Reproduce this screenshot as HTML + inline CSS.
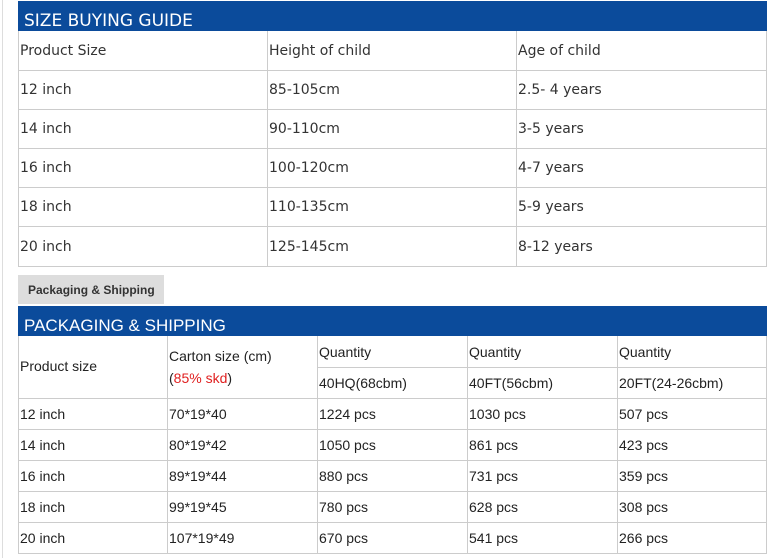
<!DOCTYPE html>
<html><head><meta charset="utf-8"><style>
body{margin:0;width:781px;height:558px;background:#fff;position:relative;overflow:hidden}
.a{position:absolute;box-sizing:border-box}
.bar{background:#0b4b9b;color:#fff;font-size:17px;padding-left:6px;line-height:20px}
.v{font-family:"DejaVu Sans",Verdana,sans-serif;font-size:14px;color:#333}
.r{font-family:"Liberation Sans",Arial,sans-serif;font-size:14px;color:#222}
.h{height:1px;background:#ccc}
.w{width:1px;background:#ccc}
.t{position:absolute;white-space:nowrap}
</style></head><body>
<div class="a" style="left:2px;top:0;width:1px;height:558px;background:#ddd"></div>
<div class="a bar v" style="left:18px;top:1px;width:749px;height:30px;padding-top:10px;font-size:17px;color:#fff">SIZE BUYING GUIDE</div>
<div class="a h" style="left:18px;top:70px;width:749px"></div>
<div class="a h" style="left:18px;top:109px;width:749px"></div>
<div class="a h" style="left:18px;top:148px;width:749px"></div>
<div class="a h" style="left:18px;top:187px;width:749px"></div>
<div class="a h" style="left:18px;top:226px;width:749px"></div>
<div class="a h" style="left:18px;top:266px;width:749px"></div>
<div class="a w" style="left:18px;top:31px;height:236px"></div>
<div class="a w" style="left:267px;top:31px;height:236px"></div>
<div class="a w" style="left:516px;top:31px;height:236px"></div>
<div class="a w" style="left:766px;top:31px;height:236px"></div>
<div class="v">
<span class="t" style="left:20px;top:43px">Product Size</span><span class="t" style="left:269px;top:43px">Height of child</span><span class="t" style="left:518px;top:43px">Age of child</span>
<span class="t" style="left:20px;top:82px">12 inch</span><span class="t" style="left:269px;top:82px">85-105cm</span><span class="t" style="left:518px;top:82px">2.5- 4 years</span>
<span class="t" style="left:20px;top:121px">14 inch</span><span class="t" style="left:269px;top:121px">90-110cm</span><span class="t" style="left:518px;top:121px">3-5 years</span>
<span class="t" style="left:20px;top:160px">16 inch</span><span class="t" style="left:269px;top:160px">100-120cm</span><span class="t" style="left:518px;top:160px">4-7 years</span>
<span class="t" style="left:20px;top:199px">18 inch</span><span class="t" style="left:269px;top:199px">110-135cm</span><span class="t" style="left:518px;top:199px">5-9 years</span>
<span class="t" style="left:20px;top:239px">20 inch</span><span class="t" style="left:269px;top:239px">125-145cm</span><span class="t" style="left:518px;top:239px">8-12 years</span>
</div>
<div class="a r" style="left:18px;top:275px;width:146px;height:29px;background:#ddd;font-weight:bold;font-size:12px;color:#333;padding:8px 0 0 10px">Packaging &amp; Shipping</div>
<div class="a bar r" style="left:18px;top:306px;width:749px;height:30px;padding-top:10px;font-size:17px;color:#fff">PACKAGING &amp; SHIPPING</div>
<div class="a h" style="left:317px;top:367px;width:450px"></div>
<div class="a h" style="left:18px;top:398px;width:749px"></div>
<div class="a h" style="left:18px;top:429px;width:749px"></div>
<div class="a h" style="left:18px;top:460px;width:749px"></div>
<div class="a h" style="left:18px;top:491px;width:749px"></div>
<div class="a h" style="left:18px;top:522px;width:749px"></div>
<div class="a h" style="left:18px;top:553px;width:749px"></div>
<div class="a w" style="left:18px;top:336px;height:218px"></div>
<div class="a w" style="left:167px;top:336px;height:218px"></div>
<div class="a w" style="left:317px;top:336px;height:218px"></div>
<div class="a w" style="left:467px;top:336px;height:218px"></div>
<div class="a w" style="left:617px;top:336px;height:218px"></div>
<div class="a w" style="left:766px;top:336px;height:218px"></div>
<div class="r">
<span class="t" style="left:20px;top:358px">Product size</span>
<span class="t" style="left:169px;top:348px">Carton size (cm)</span>
<span class="t" style="left:169px;top:370px">(<span style="color:#e02020">85% skd</span>)</span>
<span class="t" style="left:319px;top:344px">Quantity</span><span class="t" style="left:469px;top:344px">Quantity</span><span class="t" style="left:619px;top:344px">Quantity</span>
<span class="t" style="left:319px;top:375px">40HQ(68cbm)</span><span class="t" style="left:469px;top:375px">40FT(56cbm)</span><span class="t" style="left:619px;top:375px">20FT(24-26cbm)</span>
<span class="t" style="left:20px;top:406px">12 inch</span><span class="t" style="left:169px;top:406px">70*19*40</span><span class="t" style="left:319px;top:406px">1224 pcs</span><span class="t" style="left:469px;top:406px">1030 pcs</span><span class="t" style="left:619px;top:406px">507 pcs</span>
<span class="t" style="left:20px;top:437px">14 inch</span><span class="t" style="left:169px;top:437px">80*19*42</span><span class="t" style="left:319px;top:437px">1050 pcs</span><span class="t" style="left:469px;top:437px">861 pcs</span><span class="t" style="left:619px;top:437px">423 pcs</span>
<span class="t" style="left:20px;top:468px">16 inch</span><span class="t" style="left:169px;top:468px">89*19*44</span><span class="t" style="left:319px;top:468px">880 pcs</span><span class="t" style="left:469px;top:468px">731 pcs</span><span class="t" style="left:619px;top:468px">359 pcs</span>
<span class="t" style="left:20px;top:499px">18 inch</span><span class="t" style="left:169px;top:499px">99*19*45</span><span class="t" style="left:319px;top:499px">780 pcs</span><span class="t" style="left:469px;top:499px">628 pcs</span><span class="t" style="left:619px;top:499px">308 pcs</span>
<span class="t" style="left:20px;top:530px">20 inch</span><span class="t" style="left:169px;top:530px">107*19*49</span><span class="t" style="left:319px;top:530px">670 pcs</span><span class="t" style="left:469px;top:530px">541 pcs</span><span class="t" style="left:619px;top:530px">266 pcs</span>
</div>
</body></html>
